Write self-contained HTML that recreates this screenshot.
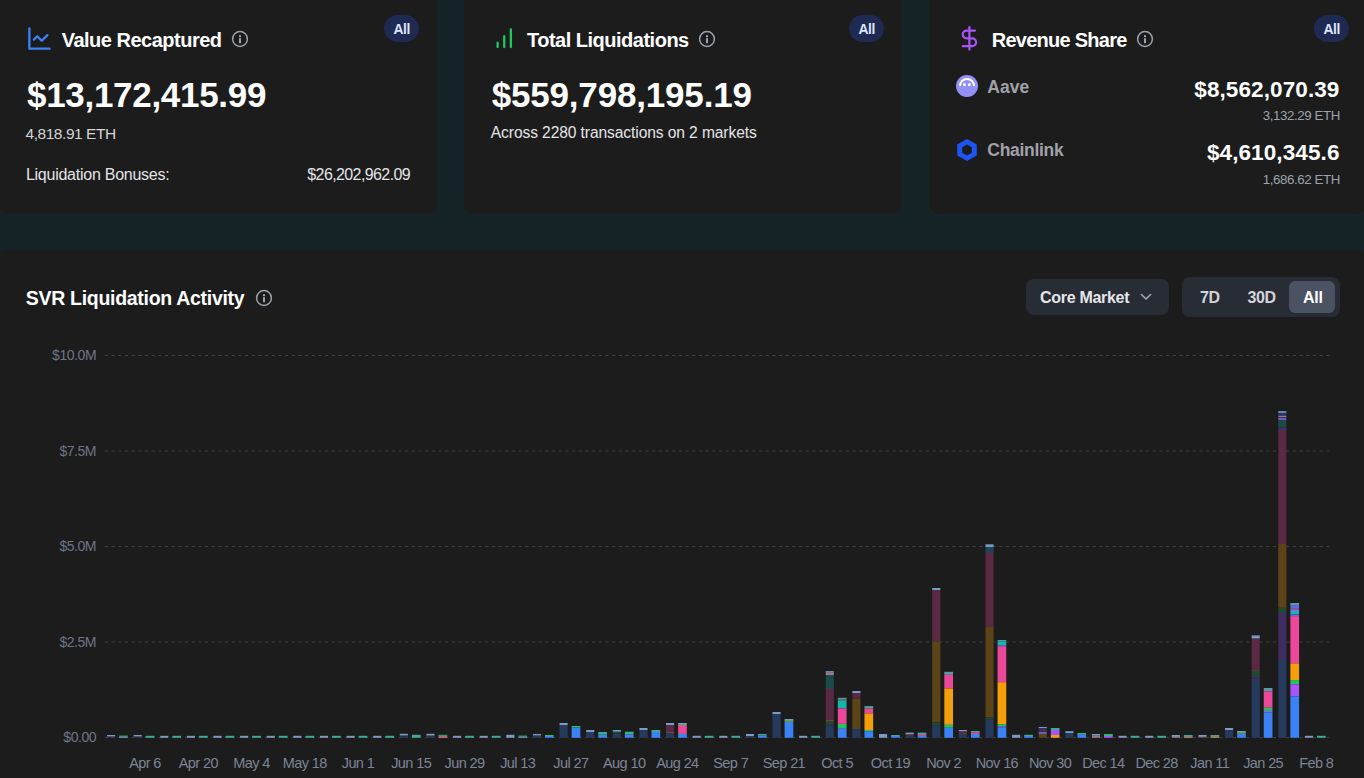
<!DOCTYPE html>
<html><head><meta charset="utf-8"><style>
html,body{margin:0;padding:0;width:1364px;height:778px;overflow:hidden;background:#152226;font-family:"Liberation Sans",sans-serif}
.card{position:absolute;background:#1c1c1c;border-radius:9px;box-shadow:0 1px 3px rgba(25,45,50,0.35)}
svg text{font-family:"Liberation Sans",sans-serif}
.yl{font-size:14px;fill:#6f7687;letter-spacing:-0.45px}
.xl{font-size:14.5px;fill:#7d8597;letter-spacing:-0.6px}
</style></head><body>
<div class="card" style="left:-1px;top:-20px;width:438px;height:234px"></div>
<div class="card" style="left:464px;top:-20px;width:438px;height:234px"></div>
<div class="card" style="left:929px;top:-20px;width:438px;height:234px"></div>
<div class="card" style="left:-1px;top:250px;width:1367px;height:560px"></div>

<svg style="position:absolute;left:25.8px;top:25.1px" width="27" height="27" viewBox="0 0 24 24" fill="none" stroke="#3b82f6" stroke-width="2.05" stroke-linecap="round" stroke-linejoin="round"><path d="M3 3v18h18"/><path d="m19 9-5 5-4-4-3 3"/></svg>
<div style="position:absolute;left:61.7px;top:30.39px;font-size:20px;line-height:20px;font-weight:700;color:#fff;letter-spacing:-0.5px;white-space:nowrap;">Value Recaptured</div>
<svg style="position:absolute;left:231px;top:29.9px" width="18" height="18" viewBox="0 0 18 18"><circle cx="9" cy="9" r="7.4" fill="none" stroke="#9ca3af" stroke-width="1.5"/><rect x="8" y="5.2" width="2" height="2" fill="#9ca3af"/><rect x="8" y="8.2" width="2" height="5" fill="#9ca3af"/></svg>
<div style="position:absolute;left:384px;top:15px;width:35px;height:27px;border-radius:14px;background:#1e2a52"></div><div style="position:absolute;left:393.4px;top:23.06px;font-size:13.9px;line-height:13.9px;font-weight:700;color:#dbe4ff;letter-spacing:-0.4px;white-space:nowrap;">All</div>
<div style="position:absolute;left:27px;top:76.93px;font-size:35px;line-height:35px;font-weight:700;color:#fff;letter-spacing:-0.3px;white-space:nowrap;">$13,172,415.99</div>
<div style="position:absolute;left:25.5px;top:126.03px;font-size:15.5px;line-height:15.5px;font-weight:400;color:#d4d4d8;letter-spacing:-0.45px;white-space:nowrap;">4,818.91 ETH</div>
<div style="position:absolute;left:25.9px;top:166.71px;font-size:16px;line-height:16px;font-weight:400;color:#e4e4e7;letter-spacing:-0.25px;white-space:nowrap;">Liquidation Bonuses:</div>
<div style="position:absolute;right:953.9px;top:166.71px;font-size:16px;line-height:16px;font-weight:400;color:#e4e4e7;letter-spacing:-0.6px;white-space:nowrap;">$26,202,962.09</div>

<svg style="position:absolute;left:491.3px;top:25.3px" width="26.5" height="26.5" viewBox="0 0 24 24" fill="none" stroke="#22c55e" stroke-width="2.1" stroke-linecap="round" stroke-linejoin="round"><path d="M6 20v-4M12 20V10M18 20V4"/></svg>
<div style="position:absolute;left:527px;top:30.39px;font-size:20px;line-height:20px;font-weight:700;color:#fff;letter-spacing:-0.5px;white-space:nowrap;">Total Liquidations</div>
<svg style="position:absolute;left:698px;top:29.9px" width="18" height="18" viewBox="0 0 18 18"><circle cx="9" cy="9" r="7.4" fill="none" stroke="#9ca3af" stroke-width="1.5"/><rect x="8" y="5.2" width="2" height="2" fill="#9ca3af"/><rect x="8" y="8.2" width="2" height="5" fill="#9ca3af"/></svg>
<div style="position:absolute;left:849px;top:15px;width:35px;height:27px;border-radius:14px;background:#1e2a52"></div><div style="position:absolute;left:858.4px;top:23.06px;font-size:13.9px;line-height:13.9px;font-weight:700;color:#dbe4ff;letter-spacing:-0.4px;white-space:nowrap;">All</div>
<div style="position:absolute;left:491.7px;top:76.93px;font-size:35px;line-height:35px;font-weight:700;color:#fff;letter-spacing:-0.18px;white-space:nowrap;">$559,798,195.19</div>
<div style="position:absolute;left:490.8px;top:125.24px;font-size:15.6px;line-height:15.6px;font-weight:400;color:#e4e4e7;letter-spacing:-0.1px;white-space:nowrap;">Across 2280 transactions on 2 markets</div>

<svg style="position:absolute;left:956px;top:25.1px" width="26.8" height="26.8" viewBox="0 0 24 24" fill="none" stroke="#a855f7" stroke-width="2" stroke-linecap="round" stroke-linejoin="round"><line x1="12" x2="12" y1="2" y2="22"/><path d="M17 5H9.5a3.5 3.5 0 0 0 0 7h5a3.5 3.5 0 0 1 0 7H6"/></svg>
<div style="position:absolute;left:991.8px;top:30.39px;font-size:20px;line-height:20px;font-weight:700;color:#fff;letter-spacing:-0.75px;white-space:nowrap;">Revenue Share</div>
<svg style="position:absolute;left:1136px;top:29.9px" width="18" height="18" viewBox="0 0 18 18"><circle cx="9" cy="9" r="7.4" fill="none" stroke="#9ca3af" stroke-width="1.5"/><rect x="8" y="5.2" width="2" height="2" fill="#9ca3af"/><rect x="8" y="8.2" width="2" height="5" fill="#9ca3af"/></svg>
<div style="position:absolute;left:1314px;top:15px;width:35px;height:27px;border-radius:14px;background:#1e2a52"></div><div style="position:absolute;left:1323.4px;top:23.06px;font-size:13.9px;line-height:13.9px;font-weight:700;color:#dbe4ff;letter-spacing:-0.4px;white-space:nowrap;">All</div>

<svg style="position:absolute;left:956px;top:75px" width="22" height="22" viewBox="0 0 22 22"><circle cx="11" cy="11" r="11" fill="#9391f7"/><path d="M3.9 11a7.1 7.1 0 0 1 14.2 0" fill="none" stroke="#fff" stroke-width="2"/><circle cx="8.4" cy="9.7" r="1.45" fill="#fff"/><circle cx="13.4" cy="9.7" r="1.45" fill="#fff"/></svg>
<div style="position:absolute;left:987.3px;top:78.67px;font-size:17.5px;line-height:17.5px;font-weight:700;color:#a1a1aa;letter-spacing:0px;white-space:nowrap;">Aave</div>
<div style="position:absolute;right:24.5px;top:78.81px;font-size:22.5px;line-height:22.5px;font-weight:700;color:#fff;letter-spacing:0.1px;white-space:nowrap;">$8,562,070.39</div>
<div style="position:absolute;right:24.09999999999991px;top:109.15px;font-size:13.3px;line-height:13.3px;font-weight:400;color:#9ca3af;letter-spacing:-0.4px;white-space:nowrap;">3,132.29 ETH</div>

<svg style="position:absolute;left:0;top:0" width="1364" height="200" viewBox="0 0 1364 200"><path fill-rule="evenodd" fill="#1d55f5" d="M967 139 L976.8 144.5 L976.8 155.5 L967 161 L957.2 155.5 L957.2 144.5 Z M967 144.5 L971.8 147.2 L971.8 152.8 L967 155.5 L962.2 152.8 L962.2 147.2 Z"/></svg>
<div style="position:absolute;left:987.3px;top:142.27px;font-size:17.5px;line-height:17.5px;font-weight:700;color:#a1a1aa;letter-spacing:-0.3px;white-space:nowrap;">Chainlink</div>
<div style="position:absolute;right:24.5px;top:142.31px;font-size:22.5px;line-height:22.5px;font-weight:700;color:#fff;letter-spacing:0.1px;white-space:nowrap;">$4,610,345.6</div>
<div style="position:absolute;right:24.09999999999991px;top:172.75px;font-size:13.3px;line-height:13.3px;font-weight:400;color:#9ca3af;letter-spacing:-0.4px;white-space:nowrap;">1,686.62 ETH</div>

<div style="position:absolute;left:25.8px;top:289.41px;font-size:19.5px;line-height:19.5px;font-weight:700;color:#fff;letter-spacing:-0.3px;white-space:nowrap;">SVR Liquidation Activity</div>
<svg style="position:absolute;left:255px;top:288.5px" width="18" height="18" viewBox="0 0 18 18"><circle cx="9" cy="9" r="7.4" fill="none" stroke="#9ca3af" stroke-width="1.5"/><rect x="8" y="5.2" width="2" height="2" fill="#9ca3af"/><rect x="8" y="8.2" width="2" height="5" fill="#9ca3af"/></svg>

<div style="position:absolute;left:1026px;top:279px;width:143px;height:36px;border-radius:8px;background:#282c35"></div>
<div style="position:absolute;left:1040px;top:289.91px;font-size:16px;line-height:16px;font-weight:700;color:#e5e7eb;letter-spacing:-0.3px;white-space:nowrap;">Core Market</div>
<svg style="position:absolute;left:1138px;top:290px" width="16" height="12" viewBox="0 0 16 12"><path d="M3.4 4.5 L8 9 L12.6 4.5" fill="none" stroke="#a0a8b8" stroke-width="1.6" stroke-linecap="round" stroke-linejoin="round"/></svg>

<div style="position:absolute;left:1182px;top:277px;width:158px;height:40px;border-radius:8px;background:#282c35"></div>
<div style="position:absolute;left:1289px;top:281px;width:46px;height:32px;border-radius:6px;background:#4b5262"></div>
<div style="position:absolute;left:1200px;top:289.91px;font-size:16px;line-height:16px;font-weight:700;color:#d1d5db;letter-spacing:-0.3px;white-space:nowrap;">7D</div>
<div style="position:absolute;left:1247.4px;top:289.91px;font-size:16px;line-height:16px;font-weight:700;color:#d1d5db;letter-spacing:-0.3px;white-space:nowrap;">30D</div>
<div style="position:absolute;left:1303px;top:289.91px;font-size:16px;line-height:16px;font-weight:700;color:#fff;letter-spacing:-0.3px;white-space:nowrap;">All</div>

<svg style="position:absolute;left:0;top:0" width="1364" height="778">
<line x1="104.8" x2="1329.3" y1="355.5" y2="355.5" stroke="#3f3f3f" stroke-width="1" stroke-dasharray="3.3 3.374"/>
<line x1="104.8" x2="1329.3" y1="451.0" y2="451.0" stroke="#3f3f3f" stroke-width="1" stroke-dasharray="3.3 3.374"/>
<line x1="104.8" x2="1329.3" y1="546.5" y2="546.5" stroke="#3f3f3f" stroke-width="1" stroke-dasharray="3.3 3.374"/>
<line x1="104.8" x2="1329.3" y1="642.0" y2="642.0" stroke="#3f3f3f" stroke-width="1" stroke-dasharray="3.3 3.374"/>
<line x1="104.8" x2="1329.3" y1="737.5" y2="737.5" stroke="#3f3f3f" stroke-width="1" stroke-dasharray="3.3 3.374"/>
<text x="96.1" y="360.0" text-anchor="end" class="yl">$10.0M</text>
<text x="96.1" y="455.5" text-anchor="end" class="yl">$7.5M</text>
<text x="96.1" y="551.0" text-anchor="end" class="yl">$5.0M</text>
<text x="96.1" y="646.5" text-anchor="end" class="yl">$2.5M</text>
<text x="96.1" y="742.0" text-anchor="end" class="yl">$0.00</text>
<text x="145.0" y="768" text-anchor="middle" class="xl">Apr 6</text>
<text x="198.3" y="768" text-anchor="middle" class="xl">Apr 20</text>
<text x="251.5" y="768" text-anchor="middle" class="xl">May 4</text>
<text x="304.8" y="768" text-anchor="middle" class="xl">May 18</text>
<text x="358.0" y="768" text-anchor="middle" class="xl">Jun 1</text>
<text x="411.2" y="768" text-anchor="middle" class="xl">Jun 15</text>
<text x="464.5" y="768" text-anchor="middle" class="xl">Jun 29</text>
<text x="517.7" y="768" text-anchor="middle" class="xl">Jul 13</text>
<text x="570.9" y="768" text-anchor="middle" class="xl">Jul 27</text>
<text x="624.2" y="768" text-anchor="middle" class="xl">Aug 10</text>
<text x="677.4" y="768" text-anchor="middle" class="xl">Aug 24</text>
<text x="730.7" y="768" text-anchor="middle" class="xl">Sep 7</text>
<text x="783.9" y="768" text-anchor="middle" class="xl">Sep 21</text>
<text x="837.1" y="768" text-anchor="middle" class="xl">Oct 5</text>
<text x="890.4" y="768" text-anchor="middle" class="xl">Oct 19</text>
<text x="943.6" y="768" text-anchor="middle" class="xl">Nov 2</text>
<text x="996.9" y="768" text-anchor="middle" class="xl">Nov 16</text>
<text x="1050.1" y="768" text-anchor="middle" class="xl">Nov 30</text>
<text x="1103.3" y="768" text-anchor="middle" class="xl">Dec 14</text>
<text x="1156.6" y="768" text-anchor="middle" class="xl">Dec 28</text>
<text x="1209.8" y="768" text-anchor="middle" class="xl">Jan 11</text>
<text x="1263.1" y="768" text-anchor="middle" class="xl">Jan 25</text>
<text x="1316.3" y="768" text-anchor="middle" class="xl">Feb 8</text>
<rect x="107.00" y="735.00" width="8.1" height="1.60" fill="#7b9bc6"/>
<rect x="107.00" y="736.60" width="8.1" height="0.90" fill="#3f2d5f"/>
<rect x="119.10" y="735.60" width="8.7" height="1.00" fill="#22c55e"/>
<rect x="119.10" y="736.60" width="8.7" height="1.20" fill="#7f98c4"/>
<rect x="133.62" y="735.00" width="8.1" height="1.60" fill="#7b9bc6"/>
<rect x="133.62" y="736.60" width="8.1" height="0.90" fill="#34336b"/>
<rect x="145.72" y="735.80" width="8.7" height="2.00" fill="#3dab96"/>
<rect x="160.24" y="735.80" width="8.1" height="2.00" fill="#7f98c4"/>
<rect x="172.34" y="735.80" width="8.7" height="2.00" fill="#3dab96"/>
<rect x="186.86" y="735.80" width="8.1" height="2.00" fill="#7f98c4"/>
<rect x="198.96" y="735.80" width="8.7" height="2.00" fill="#3dab96"/>
<rect x="213.48" y="735.80" width="8.1" height="2.00" fill="#7f98c4"/>
<rect x="225.58" y="735.80" width="8.7" height="2.00" fill="#3dab96"/>
<rect x="240.10" y="735.80" width="8.1" height="2.00" fill="#7f98c4"/>
<rect x="252.20" y="735.80" width="8.7" height="2.00" fill="#3dab96"/>
<rect x="266.72" y="735.80" width="8.1" height="2.00" fill="#7f98c4"/>
<rect x="278.82" y="735.80" width="8.7" height="2.00" fill="#3dab96"/>
<rect x="293.34" y="735.80" width="8.1" height="2.00" fill="#7f98c4"/>
<rect x="305.44" y="735.80" width="8.7" height="2.00" fill="#3dab96"/>
<rect x="319.96" y="735.80" width="8.1" height="2.00" fill="#7f98c4"/>
<rect x="332.06" y="735.80" width="8.7" height="2.00" fill="#3dab96"/>
<rect x="346.58" y="735.80" width="8.1" height="2.00" fill="#7f98c4"/>
<rect x="358.68" y="735.80" width="8.7" height="2.00" fill="#3dab96"/>
<rect x="373.20" y="735.80" width="8.1" height="2.00" fill="#7f98c4"/>
<rect x="385.30" y="735.80" width="8.7" height="2.00" fill="#3dab96"/>
<rect x="399.82" y="733.80" width="8.1" height="1.80" fill="#7b9bc6"/>
<rect x="399.82" y="735.60" width="8.1" height="0.80" fill="#1f4a2d"/>
<rect x="399.82" y="736.40" width="8.1" height="1.40" fill="#263a5d"/>
<rect x="411.92" y="734.80" width="8.7" height="3.00" fill="#3dab96"/>
<rect x="426.44" y="733.80" width="8.1" height="1.80" fill="#7b9bc6"/>
<rect x="426.44" y="735.60" width="8.1" height="0.80" fill="#7a4038"/>
<rect x="426.44" y="736.40" width="8.1" height="1.40" fill="#263a5d"/>
<rect x="438.54" y="734.80" width="8.7" height="0.90" fill="#22c55e"/>
<rect x="438.54" y="735.70" width="8.7" height="1.00" fill="#7f98c4"/>
<rect x="438.54" y="736.70" width="8.7" height="1.10" fill="#f87171"/>
<rect x="453.06" y="735.80" width="8.1" height="2.00" fill="#7f98c4"/>
<rect x="465.16" y="735.80" width="8.7" height="2.00" fill="#3dab96"/>
<rect x="479.68" y="735.80" width="8.1" height="2.00" fill="#7f98c4"/>
<rect x="491.78" y="735.80" width="8.7" height="2.00" fill="#3dab96"/>
<rect x="506.30" y="734.80" width="8.1" height="3.00" fill="#7b9bc6"/>
<rect x="518.40" y="735.60" width="8.7" height="1.00" fill="#22c55e"/>
<rect x="518.40" y="736.60" width="8.7" height="1.20" fill="#7f98c4"/>
<rect x="532.92" y="734.00" width="8.1" height="1.60" fill="#7b9bc6"/>
<rect x="532.92" y="735.60" width="8.1" height="2.20" fill="#263a5d"/>
<rect x="545.02" y="735.00" width="8.7" height="1.00" fill="#22c55e"/>
<rect x="545.02" y="736.00" width="8.7" height="1.80" fill="#3b82f6"/>
<rect x="559.54" y="723.00" width="8.1" height="2.00" fill="#7b9bc6"/>
<rect x="559.54" y="725.00" width="8.1" height="12.80" fill="#263a5d"/>
<rect x="571.64" y="726.00" width="8.7" height="1.50" fill="#22c55e"/>
<rect x="571.64" y="727.50" width="8.7" height="10.30" fill="#3b82f6"/>
<rect x="586.16" y="730.00" width="8.1" height="2.00" fill="#7b9bc6"/>
<rect x="586.16" y="732.00" width="8.1" height="5.80" fill="#263a5d"/>
<rect x="598.26" y="732.00" width="8.7" height="2.00" fill="#3dab96"/>
<rect x="598.26" y="734.00" width="8.7" height="0.70" fill="#22c55e"/>
<rect x="598.26" y="734.70" width="8.7" height="3.10" fill="#3b82f6"/>
<rect x="612.78" y="730.00" width="8.1" height="1.50" fill="#7b9bc6"/>
<rect x="612.78" y="731.50" width="8.1" height="0.60" fill="#14b8a6"/>
<rect x="612.78" y="732.10" width="8.1" height="1.40" fill="#1f4a2d"/>
<rect x="612.78" y="733.50" width="8.1" height="4.30" fill="#263a5d"/>
<rect x="624.88" y="731.70" width="8.7" height="1.30" fill="#3dab96"/>
<rect x="624.88" y="733.00" width="8.7" height="1.00" fill="#22c55e"/>
<rect x="624.88" y="734.00" width="8.7" height="0.50" fill="#94a3b8"/>
<rect x="624.88" y="734.50" width="8.7" height="3.30" fill="#3b82f6"/>
<rect x="639.40" y="728.00" width="8.1" height="2.00" fill="#7b9bc6"/>
<rect x="639.40" y="730.00" width="8.1" height="7.80" fill="#263a5d"/>
<rect x="651.50" y="730.00" width="8.7" height="2.00" fill="#3dab96"/>
<rect x="651.50" y="732.00" width="8.7" height="5.80" fill="#3b82f6"/>
<rect x="666.02" y="723.00" width="8.1" height="2.00" fill="#7b9bc6"/>
<rect x="666.02" y="725.00" width="8.1" height="7.00" fill="#5a2942"/>
<rect x="666.02" y="732.00" width="8.1" height="1.00" fill="#7a4038"/>
<rect x="666.02" y="733.00" width="8.1" height="4.80" fill="#263a5d"/>
<rect x="678.12" y="723.00" width="8.7" height="1.00" fill="#7b9bc6"/>
<rect x="678.12" y="724.00" width="8.7" height="1.00" fill="#22c55e"/>
<rect x="678.12" y="725.00" width="8.7" height="8.00" fill="#ec4899"/>
<rect x="678.12" y="733.00" width="8.7" height="0.80" fill="#f87171"/>
<rect x="678.12" y="733.80" width="8.7" height="4.00" fill="#3b82f6"/>
<rect x="692.64" y="735.80" width="8.1" height="2.00" fill="#7f98c4"/>
<rect x="704.74" y="735.80" width="8.7" height="2.00" fill="#3dab96"/>
<rect x="719.26" y="735.80" width="8.1" height="2.00" fill="#7f98c4"/>
<rect x="731.36" y="735.80" width="8.7" height="2.00" fill="#3dab96"/>
<rect x="745.88" y="734.00" width="8.1" height="2.00" fill="#7b9bc6"/>
<rect x="745.88" y="736.00" width="8.1" height="1.80" fill="#263a5d"/>
<rect x="757.98" y="734.00" width="8.7" height="1.50" fill="#3dab96"/>
<rect x="757.98" y="735.50" width="8.7" height="2.30" fill="#3b82f6"/>
<rect x="772.50" y="712.00" width="8.1" height="2.00" fill="#7b9bc6"/>
<rect x="772.50" y="714.00" width="8.1" height="23.80" fill="#263a5d"/>
<rect x="784.60" y="719.00" width="8.7" height="1.00" fill="#7b9bc6"/>
<rect x="784.60" y="720.00" width="8.7" height="1.40" fill="#22c55e"/>
<rect x="784.60" y="721.40" width="8.7" height="0.60" fill="#f87171"/>
<rect x="784.60" y="722.00" width="8.7" height="15.80" fill="#3b82f6"/>
<rect x="799.12" y="735.80" width="8.1" height="2.00" fill="#7f98c4"/>
<rect x="811.22" y="735.80" width="8.7" height="2.00" fill="#3dab96"/>
<rect x="825.74" y="671.00" width="8.1" height="1.20" fill="#5a9aa8"/>
<rect x="825.74" y="672.20" width="8.1" height="2.80" fill="#9b7c90"/>
<rect x="825.74" y="675.00" width="8.1" height="13.50" fill="#1b4b46"/>
<rect x="825.74" y="688.50" width="8.1" height="0.50" fill="#3a5a7a"/>
<rect x="825.74" y="689.00" width="8.1" height="30.60" fill="#5a2942"/>
<rect x="825.74" y="719.60" width="8.1" height="1.40" fill="#7a4038"/>
<rect x="825.74" y="721.00" width="8.1" height="3.70" fill="#1f4a2d"/>
<rect x="825.74" y="724.70" width="8.1" height="0.70" fill="#3f2d5f"/>
<rect x="825.74" y="725.40" width="8.1" height="12.40" fill="#263a5d"/>
<rect x="837.84" y="697.80" width="8.7" height="1.70" fill="#5a9aa8"/>
<rect x="837.84" y="699.50" width="8.7" height="1.10" fill="#9b7c90"/>
<rect x="837.84" y="700.60" width="8.7" height="7.40" fill="#14b8a6"/>
<rect x="837.84" y="708.00" width="8.7" height="0.60" fill="#a855f7"/>
<rect x="837.84" y="708.60" width="8.7" height="15.30" fill="#ec4899"/>
<rect x="837.84" y="723.90" width="8.7" height="4.20" fill="#22c55e"/>
<rect x="837.84" y="728.10" width="8.7" height="0.60" fill="#94a3b8"/>
<rect x="837.84" y="728.70" width="8.7" height="9.10" fill="#3b82f6"/>
<rect x="852.36" y="691.00" width="8.1" height="2.30" fill="#7b9bc6"/>
<rect x="852.36" y="693.30" width="8.1" height="5.50" fill="#5a2942"/>
<rect x="852.36" y="698.80" width="8.1" height="29.90" fill="#5d4418"/>
<rect x="852.36" y="728.70" width="8.1" height="0.70" fill="#3a5a7a"/>
<rect x="852.36" y="729.40" width="8.1" height="8.40" fill="#263a5d"/>
<rect x="864.46" y="706.00" width="8.7" height="0.80" fill="#7b9bc6"/>
<rect x="864.46" y="706.80" width="8.7" height="1.80" fill="#3dab96"/>
<rect x="864.46" y="708.60" width="8.7" height="4.90" fill="#ec4899"/>
<rect x="864.46" y="713.50" width="8.7" height="16.50" fill="#f59e0b"/>
<rect x="864.46" y="730.00" width="8.7" height="1.20" fill="#22c55e"/>
<rect x="864.46" y="731.20" width="8.7" height="6.60" fill="#3b82f6"/>
<rect x="878.98" y="734.00" width="8.1" height="3.80" fill="#7b9bc6"/>
<rect x="891.08" y="735.00" width="8.7" height="1.00" fill="#3dab96"/>
<rect x="891.08" y="736.00" width="8.7" height="1.80" fill="#3b82f6"/>
<rect x="905.60" y="732.60" width="8.1" height="1.70" fill="#7b9bc6"/>
<rect x="905.60" y="734.30" width="8.1" height="0.70" fill="#7a4038"/>
<rect x="905.60" y="735.00" width="8.1" height="2.80" fill="#263a5d"/>
<rect x="917.70" y="732.60" width="8.7" height="1.40" fill="#3dab96"/>
<rect x="917.70" y="734.00" width="8.7" height="1.20" fill="#ec4899"/>
<rect x="917.70" y="735.20" width="8.7" height="0.60" fill="#94a3b8"/>
<rect x="917.70" y="735.80" width="8.7" height="2.00" fill="#3b82f6"/>
<rect x="932.22" y="588.00" width="8.1" height="2.20" fill="#7b9bc6"/>
<rect x="932.22" y="590.20" width="8.1" height="51.30" fill="#5a2942"/>
<rect x="932.22" y="641.50" width="8.1" height="81.00" fill="#5d4418"/>
<rect x="932.22" y="722.50" width="8.1" height="2.70" fill="#1f4a2d"/>
<rect x="932.22" y="725.20" width="8.1" height="12.60" fill="#263a5d"/>
<rect x="944.32" y="671.80" width="8.7" height="3.00" fill="#5a9aa8"/>
<rect x="944.32" y="674.80" width="8.7" height="13.70" fill="#ec4899"/>
<rect x="944.32" y="688.50" width="8.7" height="36.30" fill="#f59e0b"/>
<rect x="944.32" y="724.80" width="8.7" height="3.00" fill="#22c55e"/>
<rect x="944.32" y="727.80" width="8.7" height="10.00" fill="#3b82f6"/>
<rect x="958.84" y="730.00" width="8.1" height="1.50" fill="#7b9bc6"/>
<rect x="958.84" y="731.50" width="8.1" height="1.50" fill="#5a2942"/>
<rect x="958.84" y="733.00" width="8.1" height="0.70" fill="#7a4038"/>
<rect x="958.84" y="733.70" width="8.1" height="4.10" fill="#263a5d"/>
<rect x="970.94" y="731.00" width="8.7" height="1.50" fill="#3dab96"/>
<rect x="970.94" y="732.50" width="8.7" height="1.50" fill="#ec4899"/>
<rect x="970.94" y="734.00" width="8.7" height="3.80" fill="#3b82f6"/>
<rect x="985.46" y="544.30" width="8.1" height="2.70" fill="#7b9bc6"/>
<rect x="985.46" y="547.00" width="8.1" height="4.00" fill="#1b4b46"/>
<rect x="985.46" y="551.00" width="8.1" height="2.00" fill="#34336b"/>
<rect x="985.46" y="553.00" width="8.1" height="73.90" fill="#5a2942"/>
<rect x="985.46" y="626.90" width="8.1" height="90.50" fill="#5d4418"/>
<rect x="985.46" y="717.40" width="8.1" height="2.10" fill="#1f4a2d"/>
<rect x="985.46" y="719.50" width="8.1" height="18.30" fill="#263a5d"/>
<rect x="997.56" y="640.00" width="8.7" height="1.40" fill="#5a9aa8"/>
<rect x="997.56" y="641.40" width="8.7" height="4.00" fill="#14b8a6"/>
<rect x="997.56" y="645.40" width="8.7" height="1.40" fill="#a855f7"/>
<rect x="997.56" y="646.80" width="8.7" height="35.40" fill="#ec4899"/>
<rect x="997.56" y="682.20" width="8.7" height="42.00" fill="#f59e0b"/>
<rect x="997.56" y="724.20" width="8.7" height="2.10" fill="#22c55e"/>
<rect x="997.56" y="726.30" width="8.7" height="1.00" fill="#a855f7"/>
<rect x="997.56" y="727.30" width="8.7" height="10.50" fill="#3b82f6"/>
<rect x="1012.08" y="734.80" width="8.1" height="3.00" fill="#7b9bc6"/>
<rect x="1024.18" y="734.80" width="8.7" height="1.20" fill="#3dab96"/>
<rect x="1024.18" y="736.00" width="8.7" height="1.80" fill="#3b82f6"/>
<rect x="1038.70" y="727.00" width="8.1" height="1.30" fill="#7b9bc6"/>
<rect x="1038.70" y="728.30" width="8.1" height="3.70" fill="#3f2d5f"/>
<rect x="1038.70" y="732.00" width="8.1" height="2.00" fill="#6a5cb8"/>
<rect x="1038.70" y="734.00" width="8.1" height="3.80" fill="#5d4418"/>
<rect x="1050.80" y="728.00" width="8.7" height="2.00" fill="#3dab96"/>
<rect x="1050.80" y="730.00" width="8.7" height="5.00" fill="#a855f7"/>
<rect x="1050.80" y="735.00" width="8.7" height="2.80" fill="#f59e0b"/>
<rect x="1065.32" y="731.20" width="8.1" height="1.80" fill="#7b9bc6"/>
<rect x="1065.32" y="733.00" width="8.1" height="4.80" fill="#263a5d"/>
<rect x="1077.42" y="733.00" width="8.7" height="1.00" fill="#22c55e"/>
<rect x="1077.42" y="734.00" width="8.7" height="0.50" fill="#94a3b8"/>
<rect x="1077.42" y="734.50" width="8.7" height="3.30" fill="#3b82f6"/>
<rect x="1091.94" y="734.00" width="8.1" height="1.50" fill="#7b9bc6"/>
<rect x="1091.94" y="735.50" width="8.1" height="2.30" fill="#9a7a8a"/>
<rect x="1104.04" y="734.00" width="8.7" height="1.00" fill="#3dab96"/>
<rect x="1104.04" y="735.00" width="8.7" height="1.00" fill="#22c55e"/>
<rect x="1104.04" y="736.00" width="8.7" height="1.80" fill="#a855f7"/>
<rect x="1118.56" y="735.80" width="8.1" height="2.00" fill="#7f98c4"/>
<rect x="1130.66" y="735.80" width="8.7" height="2.00" fill="#3dab96"/>
<rect x="1145.18" y="735.80" width="8.1" height="2.00" fill="#7f98c4"/>
<rect x="1157.28" y="735.80" width="8.7" height="2.00" fill="#3dab96"/>
<rect x="1171.80" y="735.00" width="8.1" height="1.90" fill="#7b9bc6"/>
<rect x="1171.80" y="736.90" width="8.1" height="0.90" fill="#9a7a8a"/>
<rect x="1183.90" y="735.00" width="8.7" height="1.90" fill="#3dab96"/>
<rect x="1183.90" y="736.90" width="8.7" height="0.90" fill="#f87171"/>
<rect x="1198.42" y="735.00" width="8.1" height="1.90" fill="#7b9bc6"/>
<rect x="1198.42" y="736.90" width="8.1" height="0.90" fill="#7a4038"/>
<rect x="1210.52" y="735.00" width="8.7" height="0.80" fill="#94a3b8"/>
<rect x="1210.52" y="735.80" width="8.7" height="1.10" fill="#22c55e"/>
<rect x="1210.52" y="736.90" width="8.7" height="0.90" fill="#f87171"/>
<rect x="1225.04" y="728.00" width="8.1" height="2.20" fill="#7b9bc6"/>
<rect x="1225.04" y="730.20" width="8.1" height="7.60" fill="#263a5d"/>
<rect x="1237.14" y="731.00" width="8.7" height="1.00" fill="#7b9bc6"/>
<rect x="1237.14" y="732.00" width="8.7" height="1.20" fill="#22c55e"/>
<rect x="1237.14" y="733.20" width="8.7" height="0.60" fill="#f87171"/>
<rect x="1237.14" y="733.80" width="8.7" height="4.00" fill="#3b82f6"/>
<rect x="1251.66" y="635.40" width="8.1" height="3.20" fill="#7b9bc6"/>
<rect x="1251.66" y="638.60" width="8.1" height="31.30" fill="#5a2942"/>
<rect x="1251.66" y="669.90" width="8.1" height="0.90" fill="#7a4038"/>
<rect x="1251.66" y="670.80" width="8.1" height="5.20" fill="#1f4a2d"/>
<rect x="1251.66" y="676.00" width="8.1" height="2.60" fill="#3f2d5f"/>
<rect x="1251.66" y="678.60" width="8.1" height="59.20" fill="#263a5d"/>
<rect x="1263.76" y="688.00" width="8.7" height="3.30" fill="#5a9aa8"/>
<rect x="1263.76" y="691.30" width="8.7" height="16.40" fill="#ec4899"/>
<rect x="1263.76" y="707.70" width="8.7" height="3.20" fill="#22c55e"/>
<rect x="1263.76" y="710.90" width="8.7" height="1.50" fill="#a855f7"/>
<rect x="1263.76" y="712.40" width="8.7" height="25.40" fill="#3b82f6"/>
<rect x="1278.28" y="411.00" width="8.1" height="2.10" fill="#5a8db0"/>
<rect x="1278.28" y="413.10" width="8.1" height="2.70" fill="#34336b"/>
<rect x="1278.28" y="415.80" width="8.1" height="1.20" fill="#9a7a8a"/>
<rect x="1278.28" y="417.00" width="8.1" height="0.90" fill="#3f2d5f"/>
<rect x="1278.28" y="417.90" width="8.1" height="2.10" fill="#6a5cb8"/>
<rect x="1278.28" y="420.00" width="8.1" height="7.70" fill="#1b4b46"/>
<rect x="1278.28" y="427.70" width="8.1" height="2.30" fill="#34336b"/>
<rect x="1278.28" y="430.00" width="8.1" height="114.00" fill="#5a2942"/>
<rect x="1278.28" y="544.00" width="8.1" height="63.80" fill="#5d4418"/>
<rect x="1278.28" y="607.80" width="8.1" height="5.20" fill="#1f4a2d"/>
<rect x="1278.28" y="613.00" width="8.1" height="47.00" fill="#3f2d5f"/>
<rect x="1278.28" y="660.00" width="8.1" height="77.80" fill="#263a5d"/>
<rect x="1290.38" y="603.00" width="8.7" height="2.70" fill="#5a9aa8"/>
<rect x="1290.38" y="605.70" width="8.7" height="2.70" fill="#6366f1"/>
<rect x="1290.38" y="608.40" width="8.7" height="0.80" fill="#9a7a8a"/>
<rect x="1290.38" y="609.20" width="8.7" height="1.80" fill="#a855f7"/>
<rect x="1290.38" y="611.00" width="8.7" height="3.40" fill="#14b8a6"/>
<rect x="1290.38" y="614.40" width="8.7" height="1.70" fill="#6366f1"/>
<rect x="1290.38" y="616.10" width="8.7" height="47.30" fill="#ec4899"/>
<rect x="1290.38" y="663.40" width="8.7" height="16.70" fill="#f59e0b"/>
<rect x="1290.38" y="680.10" width="8.7" height="4.10" fill="#22c55e"/>
<rect x="1290.38" y="684.20" width="8.7" height="12.10" fill="#a855f7"/>
<rect x="1290.38" y="696.30" width="8.7" height="41.50" fill="#3b82f6"/>
<rect x="1304.90" y="735.80" width="8.1" height="2.00" fill="#7f98c4"/>
<rect x="1317.00" y="735.80" width="8.7" height="2.00" fill="#3dab96"/>
</svg>
</body></html>
